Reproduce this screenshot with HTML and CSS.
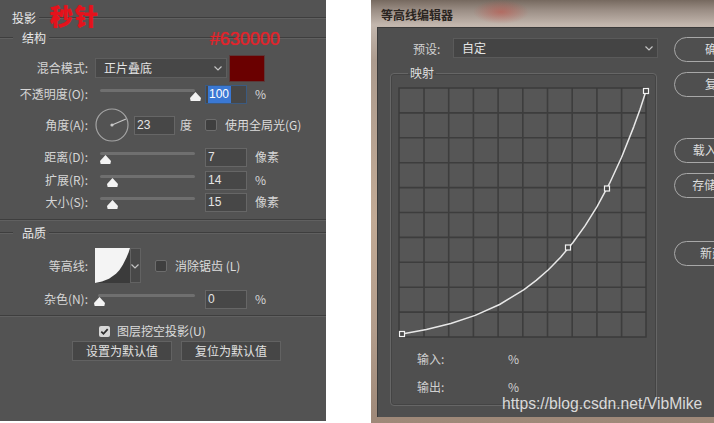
FILE: index.html
```html
<!DOCTYPE html>
<html lang="zh-CN">

<head>
    <meta charset="UTF-8">
    <meta name="viewport" content="width=device-width, initial-scale=1.0">
    <title>投影 / 等高线编辑器</title>
    <link rel="stylesheet" href="styles.css">
</head>

<body>

    <!-- layer style: drop shadow -->
    <div class="ps-panel">
        <span class="scribble">秒针</span>
        <span class="hex-note">#630000</span>

        <div class="head"><span class="head-title">投影</span><span class="groove"></span></div>
        <div class="legend-row"><span class="groove short"></span><span class="legend-text">结构</span><span class="groove"></span></div>

        <div class="row blend-row">
            <span class="lbl">混合模式:</span>
            <div class="select">正片叠底
                <svg class="chev" width="8" height="5" viewBox="0 0 8 5"><path d="M0.5 0.5 L4 4 L7.5 0.5" /></svg>
            </div>
            <div class="swatch"></div>
        </div>

        <div class="row opacity-row">
            <span class="lbl">不透明度(O):</span>
            <div class="slider"><span class="thumb" style="left: 95px"></span></div>
            <div class="num focus"><span class="sel">100</span></div>
            <span class="unit">%</span>
        </div>

        <div class="row angle-row">
            <span class="lbl">角度(A):</span>
            <svg class="dial" width="34" height="34" viewBox="0 0 34 34">
                <circle cx="17" cy="17" r="16" />
                <line x1="17" y1="17" x2="31" y2="11" />
                <circle class="dot" cx="17" cy="17" r="1.6" />
            </svg>
            <div class="num short">23</div>
            <span class="unit deg">度</span>
            <span class="check global"></span>
            <span class="check-text">使用全局光(G)</span>
        </div>

        <div class="row dist-row">
            <span class="lbl">距离(D):</span>
            <div class="slider"><span class="thumb" style="left: 5px"></span></div>
            <div class="num">7</div>
            <span class="unit">像素</span>
        </div>

        <div class="row spread-row">
            <span class="lbl">扩展(R):</span>
            <div class="slider"><span class="thumb" style="left: 12px"></span></div>
            <div class="num">14</div>
            <span class="unit">%</span>
        </div>

        <div class="row size-row">
            <span class="lbl">大小(S):</span>
            <div class="slider"><span class="thumb" style="left: 12px"></span></div>
            <div class="num">15</div>
            <span class="unit">像素</span>
        </div>

        <div class="rule rule-a"></div>
        <div class="legend-row quality"><span class="groove short"></span><span class="legend-text">品质</span><span class="groove"></span></div>

        <div class="row contour-row">
            <span class="lbl">等高线:</span>
            <svg class="contour" width="35" height="35" viewBox="0 0 35 35">
                <rect width="35" height="35" fill="#3b3b3b" />
                <path d="M0 0 H35 L33.6 4.4 L31.5 9.5 L28 16.6 L24.5 21.9 L21 25.7 L14 30.7 L7 33.5 L0 35 Z" fill="#f4f4f4" />
            </svg>
            <div class="contour-drop">
                <svg class="chev" width="8" height="5" viewBox="0 0 8 5"><path d="M0.5 0.5 L4 4 L7.5 0.5" /></svg>
            </div>
            <span class="check anti"></span>
            <span class="check-text">消除锯齿 (L)</span>
        </div>

        <div class="row noise-row">
            <span class="lbl">杂色(N):</span>
            <div class="slider noise"><span class="thumb" style="left: 1px"></span></div>
            <div class="num">0</div>
            <span class="unit">%</span>
        </div>

        <div class="rule rule-b"></div>

        <div class="knockout-row">
            <span class="check on">
                <svg width="11" height="11" viewBox="0 0 11 11"><path d="M2.3 5.6 L4.5 7.8 L8.7 3.2" /></svg>
            </span>
            <span class="check-text">图层挖空投影(U)</span>
        </div>

        <div class="btn-row">
            <div class="btn">设置为默认值</div>
            <div class="btn">复位为默认值</div>
        </div>
    </div>

    <!-- contour editor dialog -->
    <div class="dlg">
        <div class="dlg-title">等高线编辑器</div>
        <div class="dlg-body">
            <div class="dlg-main">
                <div class="preset-row">
                    <span class="preset-lbl">预设:</span>
                    <div class="select wide">自定
                        <svg class="chev" width="8" height="5" viewBox="0 0 8 5"><path d="M0.5 0.5 L4 4 L7.5 0.5" /></svg>
                    </div>
                </div>

                <fieldset class="map-box">
                    <legend>映射</legend>
                    <svg class="graph" width="265" height="260" viewBox="391 83 265 260">
                        <rect x="399" y="88" width="247" height="249" fill="#565656" />
                        <path class="grid"
                            d="M424 88V337 M448.7 88V337 M473.4 88V337 M498.1 88V337 M522.8 88V337 M547.5 88V337 M572.2 88V337 M596.9 88V337 M621.6 88V337
                               M399 112.9H646 M399 137.8H646 M399 162.7H646 M399 187.6H646 M399 212.5H646 M399 237.4H646 M399 262.3H646 M399 287.2H646 M399 312.1H646" />
                        <rect class="grid-frame" x="399" y="88" width="247" height="249" />
                        <polyline class="curve"
                            points="402,334 426.4,329.5 450.8,323.5 475.2,315.4 499.6,304.5 524,289.7 536.2,280.4 548.4,269.7 560.6,257.2 572.8,242.8 585,225.9 597.2,206.4 609.4,183.7 621.6,157.3 633.8,126.6 640,109.5 646,91" />
                        <rect class="knot" x="399.5" y="331.5" width="5" height="5" />
                        <rect class="knot" x="565.5" y="245" width="5" height="5" />
                        <rect class="knot" x="604.5" y="186" width="5" height="5" />
                        <rect class="knot" x="643.5" y="88.5" width="5" height="5" />
                    </svg>
                    <div class="io-row in"><span class="io-lbl">输入:</span><span>%</span></div>
                    <div class="io-row out"><span class="io-lbl">输出:</span><span>%</span></div>
                </fieldset>
            </div>

            <div class="dlg-side">
                <div class="pill ok">确定</div>
                <div class="pill">复位</div>
                <div class="pill load">载入(L)...</div>
                <div class="pill">存储(S)...</div>
                <div class="pill new">新建...</div>
            </div>
        </div>
        <span class="watermark">https://blog.csdn.net/VibMike</span>
    </div>

</body>

</html>
```

FILE: styles.css
```css
* {
    box-sizing: border-box;
}

body {
    margin: 0;
    width: 714px;
    height: 423px;
    overflow: hidden;
    display: flex;
    background: #fff;
    font-family: "Noto Sans CJK SC", sans-serif;
    font-size: 12px;
    color: #dcdcdc;
}

/* ---------- left: drop shadow panel ---------- */

.ps-panel {
    position: relative;
    flex-shrink: 0;
    width: 326px;
    height: 421px;
    background: #535353;
}

.scribble {
    position: absolute;
    left: 50px;
    top: 1px;
    font-size: 23px;
    font-weight: 900;
    line-height: 28px;
    letter-spacing: 2px;
    color: #e5121c;
    text-shadow: 0 0 1px #e5121c;
}

.hex-note {
    position: absolute;
    left: 210px;
    top: 29px;
    font-family: "Liberation Sans", sans-serif;
    font-size: 18px;
    line-height: 20px;
    color: #e3242c;
    text-shadow: 0 0 1px #e3242c;
}

.groove {
    flex: 1;
    height: 2px;
    border-top: 1px solid #3e3e3e;
    border-bottom: 1px solid #606060;
}

.groove.short {
    flex: none;
    width: 13px;
}

.head {
    display: flex;
    align-items: center;
    height: 28px;
    padding-top: 8px;
    padding-left: 12px;
}

.head-title {
    line-height: 20px;
    margin-right: 3px;
    color: #e8e8e8;
}

.legend-row {
    display: flex;
    align-items: center;
    height: 20px;
}

.legend-text {
    margin: 0 3px 0 9px;
    line-height: 20px;
    color: #e8e8e8;
}

.rule {
    height: 2px;
    border-top: 1px solid #3e3e3e;
    border-bottom: 1px solid #606060;
}

.row {
    display: flex;
    align-items: center;
    height: 20px;
}

.lbl {
    flex-shrink: 0;
    width: 88px;
    text-align: right;
    line-height: 16px;
    color: #d6d6d6;
}

.blend-row {
    height: 24px;
    margin-top: 8px;
}

.opacity-row {
    margin-top: 4px;
}

.angle-row {
    height: 34px;
    margin-top: 4px;
}

.dist-row {
    margin-top: 5px;
}

.spread-row {
    margin-top: 3px;
}

.size-row {
    margin-top: 2px;
}

.rule-a {
    margin-top: 7px;
}

.quality {
    margin-top: 2px;
}

.contour-row {
    height: 35px;
    margin-top: 5px;
}

.noise-row {
    margin-top: 6px;
}

.rule-b {
    margin-top: 6px;
}

.select {
    position: relative;
    width: 132px;
    height: 20px;
    margin-left: 7px;
    padding-left: 8px;
    line-height: 18px;
    background: #474747;
    border: 1px solid #5e5e5e;
    color: #e4e4e4;
}

.chev {
    position: absolute;
    right: 4px;
    top: 7px;
}

.chev path {
    fill: none;
    stroke: #c4c4c4;
    stroke-width: 1.2;
}

.swatch {
    width: 36px;
    height: 27px;
    margin-left: 2px;
    background: #6a0000;
    border: 1px solid #5a3a3a;
}

.slider {
    position: relative;
    width: 95px;
    height: 14px;
    margin-left: 12px;
}

.slider::before {
    content: "";
    position: absolute;
    left: 0;
    right: 0;
    top: 2px;
    height: 3px;
    border-radius: 2px;
    background: #6f6f6f;
}

.slider.noise {
    width: 97px;
    margin-left: 10px;
}

.thumb {
    position: absolute;
    top: 5px;
    width: 11px;
    height: 9px;
    margin-left: -5px;
    background: #f3f3f3;
    clip-path: polygon(50% 0, 100% 68%, 94% 100%, 6% 100%, 0 68%);
}

.num {
    width: 42px;
    height: 19px;
    margin-left: 10px;
    padding-left: 2px;
    background: #474747;
    border: 1px solid #666666;
    font-family: "Liberation Sans", sans-serif;
    font-size: 12px;
    line-height: 17px;
    color: #e4e4e4;
}

.num.focus {
    border-color: #3b5a80;
}

.sel {
    display: inline-block;
    padding: 0 2px 0 1px;
    background: #3a78d4;
    color: #fff;
}

.num.short {
    width: 41px;
    margin-left: 5px;
}

.unit {
    margin-left: 8px;
    line-height: 16px;
    color: #d6d6d6;
}

.unit.deg {
    margin-left: 5px;
}

.dial {
    margin-left: 7px;
}

.dial circle {
    fill: none;
    stroke: #a4a4a4;
    stroke-width: 1.2;
}

.dial line {
    stroke: #c8c8c8;
    stroke-width: 1.2;
}

.dial .dot {
    fill: #c8c8c8;
    stroke: none;
}

.check {
    display: inline-block;
    flex-shrink: 0;
    width: 12px;
    height: 12px;
    border: 1px solid #6c6c6c;
    border-radius: 2px;
    background: #3f3f3f;
}

.check.global {
    margin-left: 13px;
}

.check.anti {
    margin-left: 14px;
}

.check-text {
    margin-left: 8px;
    line-height: 16px;
    color: #dcdcdc;
}

.contour {
    margin-left: 7px;
}

.contour-drop {
    position: relative;
    width: 11px;
    height: 35px;
    background: #484848;
    border: 1px solid #626262;
}

.contour-drop .chev {
    right: 1px;
    top: 15px;
}

.knockout-row {
    display: flex;
    align-items: center;
    height: 16px;
    margin-top: 6px;
    padding-left: 99px;
}

.check.on {
    width: 11px;
    height: 11px;
    border: none;
    background: #d8d8d8;
}

.check.on svg {
    display: block;
}

.check.on path {
    fill: none;
    stroke: #2e2e2e;
    stroke-width: 1.8;
}

.knockout-row .check-text {
    margin-left: 7px;
}

.btn-row {
    display: flex;
    gap: 9px;
    margin-top: 2px;
    padding-left: 72px;
}

.btn {
    width: 100px;
    height: 20px;
    line-height: 18px;
    text-align: center;
    background: #464646;
    border: 1px solid #626262;
    color: #e0e0e0;
}

/* ---------- right: contour editor ---------- */

.dlg {
    position: relative;
    flex-shrink: 0;
    display: flex;
    flex-direction: column;
    width: 360px;
    height: 423px;
    margin-left: 45px;
    padding: 0 0 6px 6px;
    background:
        radial-gradient(ellipse 28px 12px at 130px 12px, rgba(196, 70, 60, 0.5), rgba(196, 70, 60, 0)),
        linear-gradient(180deg, #76695f 0px, #9a8d84 10px, #c3b7ae 25px, #ad9c8f 60px, #c2aa95 220px, #b39d8c 330px, #9e8878 423px);
}

.dlg-title {
    height: 27px;
    padding: 6px 0 0 4px;
    line-height: 18px;
    font-weight: bold;
    color: #2b2521;
}

.dlg-body {
    flex: 1;
    display: flex;
    background: #4f4f4f;
    box-shadow: inset 1px 1px 0 #3a3a3a;
}

.dlg-main {
    flex-shrink: 0;
    width: 297px;
}

.preset-row {
    display: flex;
    align-items: center;
    height: 20px;
    margin-top: 11px;
    padding-left: 36px;
}

.preset-lbl {
    width: 32px;
    color: #d2d2d2;
}

.select.wide {
    width: 205px;
    margin-left: 8px;
    background: #444444;
    border-color: #5a5a5a;
}

.map-box {
    width: 267px;
    margin: 5px 0 0 13px;
    padding: 0 0 9px;
    border: 1px solid #666666;
    border-radius: 4px;
    box-shadow: inset 0 0 0 1px #444444;
}

.map-box legend {
    margin-left: 17px;
    padding: 0 2px;
    line-height: 20px;
    color: #dedede;
}

.graph {
    display: block;
}

.grid {
    fill: none;
    stroke: #3d3d3d;
    stroke-width: 1.6;
}

.grid-frame {
    fill: none;
    stroke: #3a3a3a;
    stroke-width: 1.4;
}

.curve {
    fill: none;
    stroke: #e8e8e8;
    stroke-width: 1.5;
    stroke-linejoin: round;
}

.knot {
    fill: #4a4a4a;
    stroke: #f2f2f2;
    stroke-width: 1.2;
}

.io-row {
    display: flex;
    align-items: center;
    height: 20px;
    padding-left: 26px;
    color: #cfcfcf;
}

.io-row.in {
    margin-top: 5px;
}

.io-row.out {
    margin-top: 8px;
}

.io-lbl {
    width: 91px;
}

.dlg-side {
    flex-shrink: 0;
    display: flex;
    flex-direction: column;
    padding-top: 10px;
}

.pill {
    width: 86px;
    height: 25px;
    margin-top: 10px;
    line-height: 22px;
    text-align: center;
    white-space: nowrap;
    border: 1.5px solid #a8a8a8;
    border-radius: 13px;
    color: #dedede;
}

.pill.ok {
    margin-top: 0;
}

.pill.load {
    margin-top: 41px;
}

.pill.new {
    margin-top: 43px;
}

.watermark {
    position: absolute;
    left: 131px;
    top: 395px;
    font-family: "Liberation Sans", sans-serif;
    font-size: 15.7px;
    line-height: 18px;
    color: rgba(238, 238, 238, 0.88);
}
```
